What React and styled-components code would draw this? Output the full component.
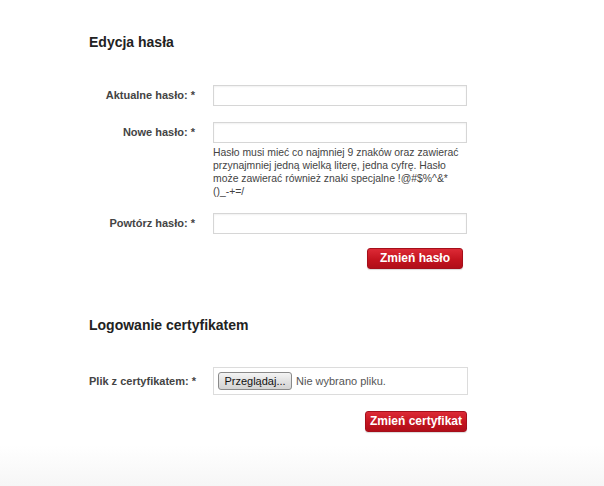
import React from "react";
import styled, { createGlobalStyle } from "styled-components";

const GlobalStyle = createGlobalStyle`
  html, body {
    margin: 0;
    padding: 0;
    background: #fff;
  }
  body {
    font-family: "Liberation Sans", Arial, sans-serif;
    color: #333;
  }
`;

// Strona z delikatnym gradientem na dole
const Page = styled.div`
  min-height: 486px;
  box-sizing: border-box;
  padding: 34px 0 0 89px;
  background: linear-gradient(
    to bottom,
    #fff 0px,
    #fff 445px,
    #f6f6f6 486px
  );
`;

const Section = styled.section`
  width: 378px;
  margin-bottom: ${(props) => props.gap || "0px"};
`;

const Heading = styled.h2`
  margin: 0 0 ${(props) => props.space || "34px"} 0;
  font-size: 14px;
  line-height: 17px;
  font-weight: bold;
  color: #222;
`;

const Row = styled.div`
  display: grid;
  grid-template-columns: 106px 254px;
  column-gap: 18px;
  align-items: start;
  margin-bottom: ${(props) => props.space || "16px"};
`;

const Label = styled.label`
  font-size: 11px;
  font-weight: bold;
  color: #444;
  text-align: right;
  line-height: 13px;
  padding-top: ${(props) => props.top || "4px"};
  white-space: nowrap;
`;

const Field = styled.div`
  display: flex;
  flex-direction: column;
`;

const Input = styled.input`
  box-sizing: border-box;
  width: 254px;
  height: 21px;
  margin: 0;
  border: 1px solid #d6d6d6;
  box-shadow: inset 0 1px 2px rgba(0, 0, 0, 0.06);
  background: #fff;
  outline: none;
`;

const Hint = styled.p`
  margin: 3px 0 0 0;
  font-size: 10.4px;
  line-height: 13px;
  color: #444;
  white-space: nowrap;
`;

const Actions = styled.div`
  display: flex;
  justify-content: flex-end;
  padding-right: ${(props) => props.inset || "0px"};
`;

const RedButton = styled.button`
  height: 21px;
  padding: 0 ${(props) => props.pad || "14px"};
  border: 1px solid #a50f1b;
  border-radius: 3px;
  background: linear-gradient(to bottom, #dc2a36 0%, #c4141f 55%, #b00e19 100%);
  color: #fff;
  font-family: "Liberation Sans", Arial, sans-serif;
  font-size: 12px;
  font-weight: bold;
  line-height: 19px;
  cursor: pointer;
  box-shadow: 0 1px 1px rgba(0, 0, 0, 0.15);
`;

const FileBox = styled.div`
  box-sizing: border-box;
  width: 255px;
  height: 28px;
  border: 1px solid #dcdcdc;
  background: #fff;
  display: flex;
  align-items: center;
  padding: 0 4px;
  gap: 4px;
`;

const BrowseButton = styled.button`
  box-sizing: border-box;
  width: 74px;
  height: 18px;
  padding: 0;
  border: 1px solid #8a8a8a;
  border-radius: 3px;
  background: linear-gradient(to bottom, #f4f4f4 0%, #e2e2e2 50%, #d3d3d3 100%);
  font-family: "Liberation Sans", Arial, sans-serif;
  font-size: 11px;
  color: #111;
  line-height: 16px;
`;

const FileName = styled.span`
  font-size: 11px;
  color: #555;
`;

export default function App() {
  return (
    <>
      <GlobalStyle />
      <Page>
        <Section gap="48px">
          <Heading>Edycja hasła</Heading>
          <Row>
            <Label>Aktualne hasło: *</Label>
            <Input type="password" />
          </Row>
          <Row space="15px">
            <Label>Nowe hasło: *</Label>
            <Field>
              <Input type="password" />
              <Hint>
                Hasło musi mieć co najmniej 9 znaków oraz zawierać
                <br />
                przynajmniej jedną wielką literę, jedna cyfrę. Hasło
                <br />
                może zawierać również znaki specjalne !@#$%^&*
                <br />
                ()_-+=/
              </Hint>
            </Field>
          </Row>
          <Row space="14px">
            <Label>Powtórz hasło: *</Label>
            <Input type="password" />
          </Row>
          <Actions inset="4px">
            <RedButton pad="12px">Zmień hasło</RedButton>
          </Actions>
        </Section>

        <Section>
          <Heading space="33px">Logowanie certyfikatem</Heading>
          <Row>
            <Label top="8px">Plik z certyfikatem: *</Label>
            <FileBox>
              <BrowseButton>Przeglądaj...</BrowseButton>
              <FileName>Nie wybrano pliku.</FileName>
            </FileBox>
          </Row>
          <Actions>
            <RedButton pad="4px">Zmień certyfikat</RedButton>
          </Actions>
        </Section>
      </Page>
    </>
  );
}
